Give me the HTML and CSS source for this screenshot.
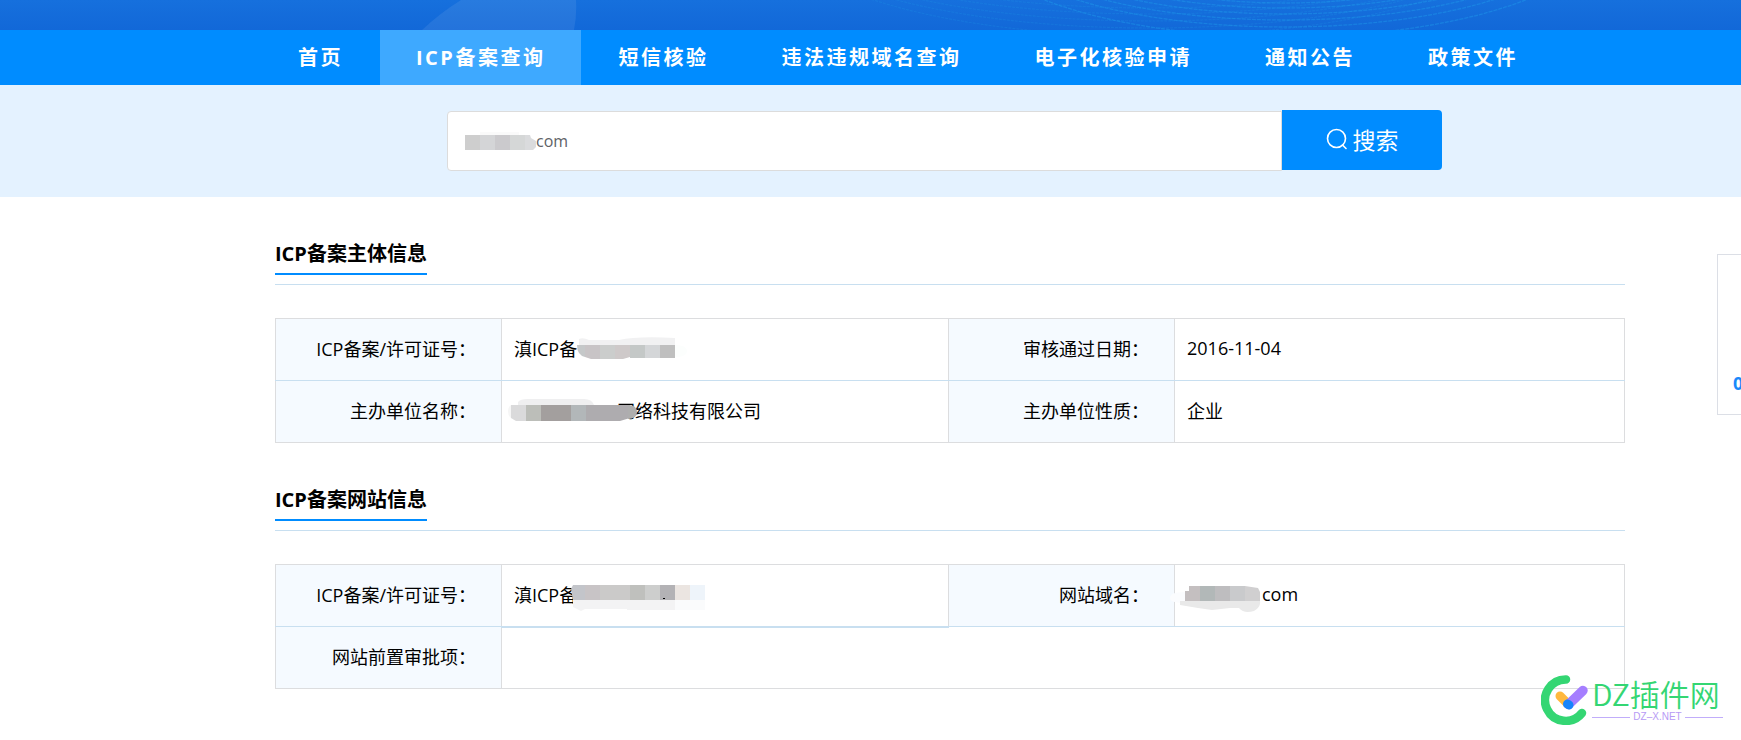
FILE: index.html
```html
<!DOCTYPE html>
<html lang="zh-CN">
<head>
<meta charset="utf-8">
<title>ICP备案查询</title>
<link rel="stylesheet" href="styles.css">
</head>
<body>
<header class="banner">
  <svg class="banner-art" width="1741" height="30" viewBox="0 0 1741 30" aria-hidden="true">
    <path d="M461 0Q440 13 422 30H574Q577 15 576 0Z" fill="#fff" fill-opacity=".08"/>
    <g fill="none" stroke="#1e8fe6" stroke-width="1.2" stroke-dasharray="3 1" stroke-opacity=".3">
      <ellipse cx="1150" cy="-70" rx="330" ry="78"/>
      <ellipse cx="1150" cy="-70" rx="345" ry="84"/>
      <ellipse cx="1150" cy="-70" rx="355" ry="91"/>
      <ellipse cx="1150" cy="-70" rx="362" ry="98"/>
      <ellipse cx="1150" cy="-70" rx="368" ry="106"/>
    </g>
    <g fill="none" stroke="#1e9bec" stroke-width="1.3" stroke-dasharray="4 1" stroke-opacity=".45">
      <ellipse cx="1285" cy="-70" rx="226" ry="73"/>
      <ellipse cx="1285" cy="-70" rx="250" ry="78"/>
      <ellipse cx="1285" cy="-70" rx="270" ry="84"/>
      <ellipse cx="1285" cy="-70" rx="286" ry="90"/>
      <ellipse cx="1285" cy="-70" rx="300" ry="97"/>
      <ellipse cx="1285" cy="-70" rx="318" ry="107"/>
    </g>
  </svg>
</header>
<nav class="nav">
  <a href="#">首页</a>
  <a href="#" class="active">ICP备案查询</a>
  <a href="#">短信核验</a>
  <a href="#">违法违规域名查询</a>
  <a href="#">电子化核验申请</a>
  <a href="#">通知公告</a>
  <a href="#">政策文件</a>
</nav>
<form class="search">
  <div class="field">
    <input type="text" value="com" aria-label="搜索域名">
    <svg class="field-mask" width="72" height="18" viewBox="0 0 72 18" aria-hidden="true">
      <path d="M15 0H54V3H15Z" fill="#fafafa"/>
      <path d="M0 3H15V18H0Z" fill="#cecece"/><path d="M15 3H30V18H15Z" fill="#d4d5d7"/>
      <path d="M30 3H45V18H30Z" fill="#cbcacd"/><path d="M45 3H60V18H45Z" fill="#d5d7d7"/>
      <path d="M60 3H65L66 6L71 9V15L68 18H60Z" fill="#dadbdd"/>
    </svg>
  </div>
  <button type="button">
    <svg width="22" height="22" viewBox="0 0 22 22" fill="none" stroke="currentColor" stroke-width="1.6" stroke-linecap="round" aria-hidden="true"><circle cx="10.500" cy="10.500" r="9"/><path d="M16.500 17L20 20.500"/></svg>
    搜索
  </button>
</form>
<main class="content">
  <section>
    <h2><span>ICP备案主体信息</span></h2>
    <table>
      <colgroup><col class="c-label"><col class="c-value"><col class="c-label"><col></colgroup>
      <tr>
        <th scope="row">ICP备案/许可证号：</th>
        <td><div class="value">滇ICP备<svg width="110" height="22" viewBox="0 0 110 22" aria-hidden="true">
          <path d="M2 2Q6 0 12 3H42Q60 -1 98 1V8H2Z" fill="#f1f1f2"/>
          <path d="M0 8H8V20Q0 18 0 8" fill="#c5c8c9"/><path d="M8 8H23V22H14L8 20Z" fill="#c8c4c6"/>
          <path d="M23 8H38V22H23Z" fill="#cbcdcc"/><path d="M38 8H53V20L46 22H38Z" fill="#cec9c9"/>
          <path d="M53 8H68V21H53Z" fill="#c4c8c7"/><path d="M68 8H83V21H68Z" fill="#d4d6d8"/><path d="M83 8H98V21H83Z" fill="#bfbfbf"/>
          <path d="M98 8Q110 8 110 14Q110 20 98 20Z" fill="#fcfefd"/>
        </svg></div></td>
        <th scope="row">审核通过日期：</th>
        <td>2016-11-04</td>
      </tr>
      <tr>
        <th scope="row">主办单位名称：</th>
        <td><div class="value"><svg class="company-mask" width="130" height="22" viewBox="0 0 130 22" aria-hidden="true">
          <path d="M10 3Q12 0 20 0H76Q84 0 86 6H10Z" fill="#efeff0"/>
          <path d="M3 6V19Q0 17 0 12Q0 8 3 6" fill="#f6f6f6"/>
          <path d="M3 6H18V22H8L3 19Z" fill="#dadadb"/><path d="M18 6H33V22H18Z" fill="#bcbeb9"/>
          <path d="M33 6H63V22H33Z" fill="#a39f9e"/><path d="M63 6H78V22H63Z" fill="#b2b7b9"/>
          <path d="M78 6H122V19L112 22H78Z" fill="#aeacaf"/><path d="M120 6Q129 6 129 13Q129 20 120 20Z" fill="#aeaeae"/>
        </svg>网络科技有限公司</div></td>
        <th scope="row">主办单位性质：</th>
        <td>企业</td>
      </tr>
    </table>
  </section>
  <section>
    <h2><span>ICP备案网站信息</span></h2>
    <table>
      <colgroup><col class="c-label"><col class="c-value"><col class="c-label"><col></colgroup>
      <tr>
        <th scope="row">ICP备案/许可证号：</th>
        <td class="strong-line"><div class="value">滇ICP备<svg class="licence-mask" width="134" height="26" viewBox="0 0 134 26" aria-hidden="true">
          <path d="M2 15H104V25H56V24H14L10 26L2 22Z" fill="#f3f3f4"/><path d="M104 15H134V25H104Z" fill="#fafbfc"/>
          <path d="M2 0H14V15H2L0 4Z" fill="#c3c5ca"/><path d="M14 0H29V15H14Z" fill="#c8c4c6"/>
          <path d="M29 0H59V15H29Z" fill="#cbcac9"/><path d="M59 0H74V15H59Z" fill="#bfc0bd"/>
          <path d="M74 0H89V15H74Z" fill="#cdcecd"/><path d="M89 0H104V15H89Z" fill="#b3b2b5"/>
          <path d="M104 0H119V15H104Z" fill="#ebe5e1"/><path d="M119 0H134V15H119Z" fill="#eef4fa"/>
          <path d="M92 13H94V14H92Z" fill="#000"/>
        </svg></div></td>
        <th scope="row">网站域名：</th>
        <td><div class="value"><svg class="domain-mask" width="92" height="26" viewBox="0 0 92 26" aria-hidden="true">
          <path d="M15 6Q0 6 0 12Q0 17 15 17Z" fill="#fbfcfe"/>
          <path d="M10 15H90Q91 21 84 25Q74 28 69 22H60L42 24L28 22L10 19Z" fill="#e9e9e9"/>
          <path d="M15 5H19V0H30V15H15Z" fill="#c4bfc0"/><path d="M30 0H45V15H30Z" fill="#b2b8b8"/>
          <path d="M45 0H60V15H45Z" fill="#bebdbf"/><path d="M60 0H75V15H60Z" fill="#c9cacc"/>
          <path d="M75 0L88 2L90 6V15H75Z" fill="#d0cfd0"/>
        </svg>com</div></td>
      </tr>
      <tr>
        <th scope="row">网站前置审批项：</th>
        <td colspan="3"></td>
      </tr>
    </table>
  </section>
</main>
<aside class="side-panel">0</aside>
<div class="brand">
  <svg width="48" height="50" viewBox="0 0 48 50" fill="none" stroke-linecap="round" aria-hidden="true">
    <path d="M25 4.500A20.700 20.700 0 1 0 41 38" stroke="#34d673" stroke-width="8.500"/>
    <path d="M19 21L27 29" stroke="#ffb83e" stroke-width="9"/>
    <path d="M27.500 29.500L42 15.500" stroke="#a57eff" stroke-width="9.500"/>
    <path d="M26.500 29L28 30" stroke="#1684fc" stroke-width="9"/>
  </svg>
  <div class="brand-text">
    <div class="brand-name">DZ插件网</div>
    <div class="brand-site">DZ–X.NET</div>
  </div>
</div>
</body>
</html>
```
FILE: styles.css
```css
* { box-sizing: border-box; }

body {
  position: relative;
  min-height: 100vh;
  margin: 0;
  overflow: hidden;
  background: #fff;
  color: #000;
  font-family: "Open Sans", "Noto Sans CJK SC", sans-serif;
  font-size: 18px;
}

svg { flex: none; }

.banner {
  height: 30px;
  overflow: hidden;
  background: linear-gradient(#1670dd, #1268d8);
}

.banner-art { display: block; }

.nav {
  display: flex;
  gap: 1px;
  height: 55px;
  padding-left: 262px;
  background: #008cff;
}

.nav a {
  padding: 1px 36px 0;
  color: #fff;
  font-size: 20px;
  font-weight: 700;
  line-height: 54px;
  letter-spacing: .125em;
  text-decoration: none;
  white-space: nowrap;
}

.nav .active { background: #3ea9ff; }

.search {
  display: flex;
  height: 112px;
  padding: 25px 299px 0 447px;
  background: #e4f2ff;
}

.field {
  position: relative;
  flex: 1;
  padding-top: 1px;
}

.field input {
  width: 100%;
  height: 60px;
  padding: 0 16px 0 88px;
  border: 1px solid #dcdcdc;
  border-radius: 4px 0 0 4px;
  background: #fff;
  color: #606266;
  font: inherit;
  font-size: 16px;
}

.field-mask {
  position: absolute;
  top: 22px;
  left: 18px;
}

.search button {
  display: flex;
  align-items: center;
  justify-content: center;
  gap: 5px;
  width: 160px;
  height: 60px;
  padding: 0 0 3px;
  border: 0;
  border-radius: 0 4px 4px 0;
  background: #008cff;
  color: #fff;
  font: inherit;
  font-size: 23px;
}

.content { padding: 38px 116px 0 275px; }

section { margin-bottom: 38px; }

h2 {
  display: flex;
  margin: 0 0 33px;
  padding-bottom: 9px;
  border-bottom: 1px solid #c8dff0;
  font-size: 20px;
  line-height: 38px;
}

h2 span { border-bottom: 2px solid #008cff; }

table {
  width: 100%;
  border-collapse: collapse;
  table-layout: fixed;
}

.c-label { width: 226px; }
.c-value { width: 447px; }

th,
td {
  height: 62px;
  padding: 0 12px 3px;
  border: 1px solid #dcdddf;
  font-weight: 400;
  text-align: left;
  white-space: nowrap;
}

th {
  padding-right: 25px;
  background: #f5faff;
  text-align: right;
}

tr:first-child > * { border-bottom-color: #c8dff0; }
tr:last-child > * { border-top-color: #c8dff0; }
td.strong-line { border-bottom: 2px solid #c8dff0; }

.value {
  display: flex;
  align-items: center;
}

.value svg { position: relative; }
.company-mask { margin: 0 -21px 0 -6px; }
.licence-mask { margin: 9px 0 0 -6px; }
.domain-mask { margin: 9px 0 0 -17px; }

.side-panel {
  position: absolute;
  top: 254px;
  right: 0;
  width: 24px;
  height: 161px;
  padding: 114px 0 0 15px;
  overflow: hidden;
  border: 1px solid #dcdfe6;
  border-right: 0;
  background: #fff;
  color: #1989fa;
  font-weight: 700;
  line-height: 28px;
}

.brand {
  position: absolute;
  right: 18px;
  bottom: 15px;
  display: flex;
  gap: 3px;
}

.brand-text { width: 131px; }

.brand-name {
  color: #34d673;
  font-family: "Noto Sans CJK SC", sans-serif;
  font-size: 30px;
  font-weight: 350;
  line-height: 36px;
  white-space: nowrap;
}

.brand-site {
  display: flex;
  align-items: center;
  gap: 3px;
  color: #b79af5;
  font-family: "Liberation Sans", sans-serif;
  font-size: 10px;
  line-height: 12px;
}

.brand-site::before,
.brand-site::after {
  flex: 1;
  height: 1px;
  background: #c1adfa;
  content: "";
}
```
